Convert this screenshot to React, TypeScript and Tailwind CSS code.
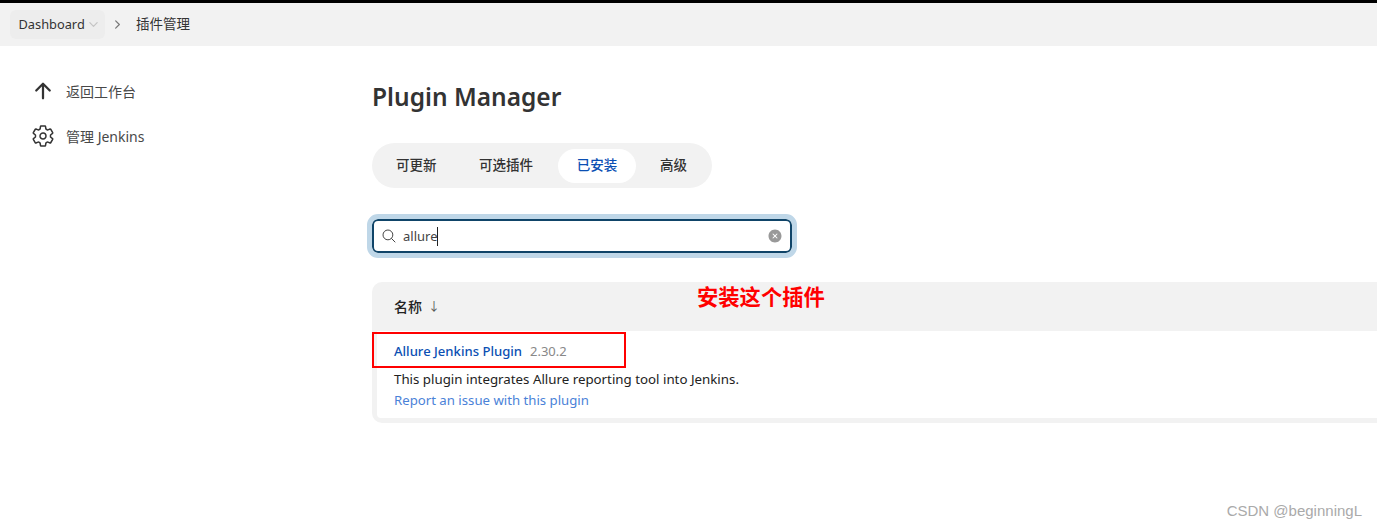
import React from "react";
import {
  IoArrowUpOutline,
  IoChevronDownOutline,
  IoChevronForwardOutline,
  IoCloseCircle,
  IoSearchOutline,
  IoSettingsOutline,
} from "react-icons/io5";

const font = { fontFamily: '"Noto Sans", "Noto Sans CJK SC", sans-serif' };

export default function App() {
  return (
    <div className="h-[529px] w-[1377px] overflow-hidden bg-white relative text-[#333]" style={font}>
      <div className="h-[3px] bg-black" />
      <div className="h-[43px] bg-[#f2f2f2] flex items-center pl-[10px]">
        <div className="h-[29px] w-[95px] rounded-md bg-[#ededed] flex items-center pl-[8.5px] text-[12.8px] text-[#333]">
          Dashboard
          <IoChevronDownOutline className="ml-[2px] text-[#c4c4c4]" size={13} />
        </div>
        <IoChevronForwardOutline className="ml-[6px] text-[#777]" size={13} />
        <span className="ml-[12px] text-[13.5px] text-[#333]">插件管理</span>
      </div>
      <div className="flex">
        <div className="w-[372px] shrink-0 pl-[31px] pt-[33px] text-[14px] text-[#484848]">
          <div className="flex items-center h-[24px]">
            <IoArrowUpOutline size={24} className="text-[#333]" />
            <span className="ml-[11px]">返回工作台</span>
          </div>
          <div className="flex items-center h-[24px] mt-[21px]">
            <IoSettingsOutline size={24} className="text-[#333]" />
            <span className="ml-[11px]">管理 Jenkins</span>
          </div>
        </div>
        <div className="flex-1 min-w-0">
          <h1 className="mt-[33px] h-[36px] text-[24.5px] leading-[36px] font-semibold text-[#333]">Plugin Manager</h1>
          <div className="mt-[28px] h-[45px] w-[340px] rounded-[23px] bg-[#f2f2f2] flex items-center pl-[5px] text-[13.5px] font-medium text-[#333]">
            <span className="w-[74px] pl-[19px]">可更新</span>
            <span className="w-[107px] pl-[28px]">可选插件</span>
            <span className="h-[34px] w-[78px] rounded-[17px] bg-white flex items-center justify-center text-[#0b4fb3]">已安装</span>
            <span className="pl-[24px]">高级</span>
          </div>
          <div className="mt-[31px] h-[34px] w-[420px] rounded-md border-2 border-[#0f4468] outline-[5px] outline-[#bfd7e8] bg-white flex items-center pl-[7px] pr-[7px] text-[13px] text-[#444]">
            <IoSearchOutline size={16} className="text-[#444]" />
            <span className="ml-[6px] pt-px">allure</span>
            <span className="w-px h-[19px] bg-[#222]" />
            <IoCloseCircle size={16} className="ml-auto text-[#999]" />
          </div>
          <div className="mt-[29px] w-[1100px] h-[141px] rounded-[10px] bg-[#f2f2f2] px-[5px] pb-[5px] flex flex-col">
            <div className="h-[49px] shrink-0 pl-[17px] flex items-center text-[14px] font-medium text-[#222]">
              名称
              <span className="ml-[6px] text-[12px] text-[#555] font-normal">↓</span>
            </div>
            <div className="flex-1 bg-white rounded-b-[4px] pl-[17px] pt-[10px] text-[13px] leading-[20px]">
              <div className="h-[20px]">
                <span className="text-[13.1px] font-medium text-[#0b4fb3]">Allure Jenkins Plugin</span>
                <span className="ml-[8px] text-[#888]">2.30.2</span>
              </div>
              <div className="mt-[8px] h-[20px] text-[13.3px] text-[#222]">This plugin integrates Allure reporting tool into Jenkins.</div>
              <div className="mt-px h-[20px] text-[13.2px] text-[#4a82d8]">Report an issue with this plugin</div>
            </div>
          </div>
        </div>
      </div>
      <div className="absolute left-[372px] top-[332px] h-[36px] w-[254px] border-2 border-[#f00]" />
      <div className="absolute left-[697px] top-[284px] text-[21.3px] leading-[26px] font-bold text-[#f00]">安装这个插件</div>
      <div className="absolute right-[15px] top-[501px] text-[15px] leading-[20px] text-[#aaa]" style={{ fontFamily: '"Liberation Sans", sans-serif' }}>CSDN @beginningL</div>
    </div>
  );
}
